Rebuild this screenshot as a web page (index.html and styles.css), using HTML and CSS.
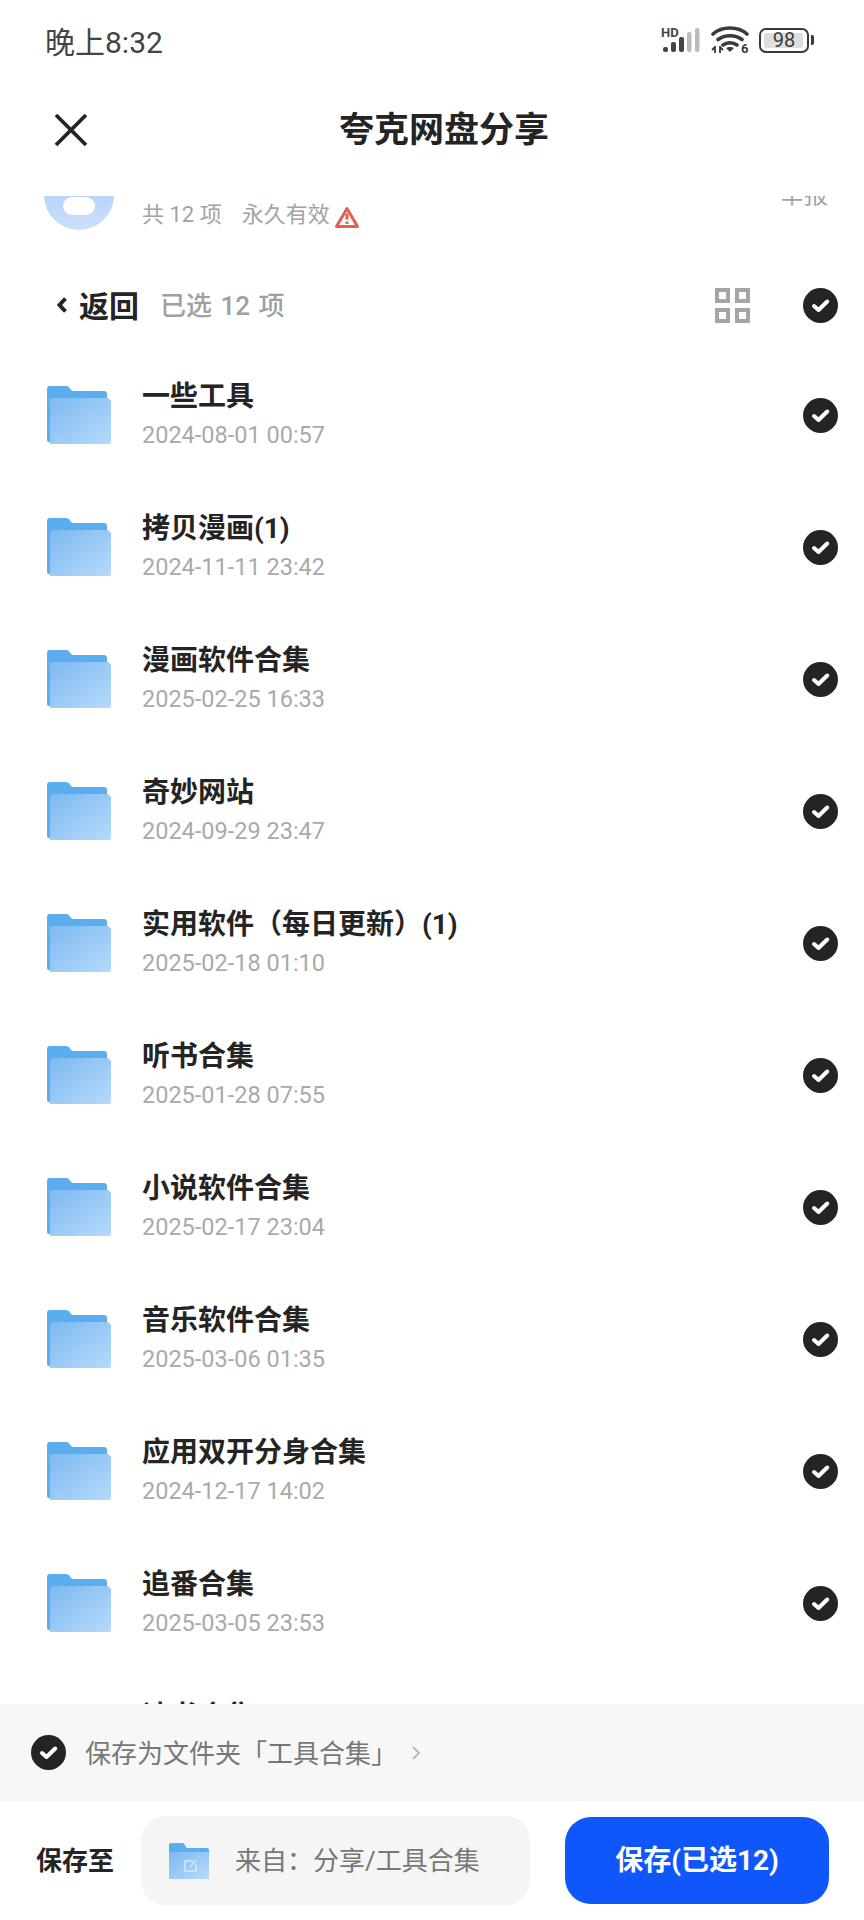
FILE: index.html
```html
<!DOCTYPE html>
<html lang="zh-CN">
<head>
    <meta charset="UTF-8">
    <meta name="viewport" content="width=device-width, initial-scale=1.0">
    <title>夸克网盘分享</title>
    <link rel="stylesheet" href="styles.css">
</head>
<body>
    <svg class="defs" width="0" height="0">
        <defs>
            <linearGradient id="folderFront" x1="0" y1="0" x2="1" y2="1">
                <stop offset="0" stop-color="#7db9f1"/>
                <stop offset="1" stop-color="#b6daFB"/>
            </linearGradient>
            <symbol id="folder" viewBox="0 0 64 58">
                <path d="M0 3a3 3 0 0 1 3-3h16c2 0 3 1 4 2.500l1 1.200c.5.800 1.500 1.300 3 1.300h30a3 3 0 0 1 3 3v48H2a2 2 0 0 1-2-2z" fill="#5aaef0"/>
                <path d="M3 14a2 2 0 0 1 2-2h56l3 3v41a2 2 0 0 1-2 2H3z" fill="url(#folderFront)"/>
                <path d="M53 21h6M53 25h6" stroke="#9cc6ec" stroke-width="1.200"/>
            </symbol>
            <symbol id="check" viewBox="0 0 35 35">
                <circle cx="17.5" cy="17.5" r="17.5" fill="#242424"/>
                <path d="M11 18l4.500 4 8.700-8.500" fill="none" stroke="#fff" stroke-width="4" stroke-linecap="round" stroke-linejoin="round"/>
            </symbol>
        </defs>
    </svg>

    <div class="status-bar">
        <span class="clock">晚上8:32</span>
        <div class="status-icons">
            <svg class="signal" width="40" height="26" viewBox="0 0 40 26">
                <text x="0" y="10" class="hd">HD</text>
                <rect x="2" y="20" width="5" height="5" rx="2" fill="#444"/>
                <rect x="10" y="15" width="5" height="10" rx="2" fill="#444"/>
                <rect x="18" y="10" width="5" height="15" rx="2" fill="#444"/>
                <rect x="26" y="5" width="4.500" height="20" rx="2" fill="#bbb"/>
                <rect x="34" y="1" width="4.500" height="24" rx="2" fill="#bbb"/>
            </svg>
            <svg class="wifi" width="38" height="30" viewBox="0 0 38 30">
                <path d="M2 9C11 1 27 1 36 9M7 14.500c7-5 17-5 24 0M12 20c4-3 10-3 14 0" fill="none" stroke="#3a3a3a" stroke-width="3.600" stroke-linecap="round"/>
                <path d="M15 23c2-1.500 6-1.500 8 0l-4 4z" fill="#3a3a3a"/>
                <path d="M4 21v7M1 25l3-3M9 21v7M12 25l-3-3" fill="none" stroke="#3a3a3a" stroke-width="1.800"/>
                <text x="30" y="28" class="six">6</text>
            </svg>
            <div class="battery">
                <div class="battery-box"><div class="battery-fill"></div><span>98</span></div>
                <div class="battery-cap"></div>
            </div>
        </div>
    </div>

    <header class="title-bar">
        <svg class="close-icon" width="34" height="34" viewBox="0 0 34 34">
            <path d="M2 2l30 30M32 2L2 32" stroke="#242424" stroke-width="3.800" fill="none"/>
        </svg>
        <h1>夸克网盘分享</h1>
    </header>

    <main class="content">
        <div class="share-info">
            <div class="share-inner">
                <div class="avatar"><div class="avatar-hole"></div></div>
                <div class="share-meta">
                    <span class="share-count">共 12 项</span>
                    <span class="share-expire">永久有效</span>
                    <svg class="warn-icon" width="26" height="24" viewBox="0 0 26 24">
                        <path d="M13 3.500L23.500 21.500H2.500z" fill="none" stroke="#e0605a" stroke-width="3" stroke-linejoin="round"/>
                        <path d="M13 8.500v6M13 16.500v2.500" stroke="#e0605a" stroke-width="3" fill="none"/>
                    </svg>
                </div>
                <span class="report">举报</span>
            </div>
        </div>

        <div class="toolbar">
            <svg class="back-icon" width="12" height="18" viewBox="0 0 12 18">
                <path d="M9.500 2.500L3.500 9l6 6.500" fill="none" stroke="#242424" stroke-width="4"/>
            </svg>
            <span class="back-label">返回</span>
            <span class="selected-label">已选 12 项</span>
            <svg class="grid-icon" width="35" height="35" viewBox="0 0 35 35">
                <path d="M2 2h11v11H2zM22 2h11v11H22zM2 22h11v11H2zM22 22h11v11H22z" fill="none" stroke="#a5a5a5" stroke-width="4"/>
            </svg>
            <svg class="check-icon"><use href="#check"/></svg>
        </div>

        <ul class="file-list">
            <li class="file-row">
                <svg class="folder-icon"><use href="#folder"/></svg>
                <div class="file-text"><div class="file-name">一些工具</div><div class="file-date">2024-08-01 00:57</div></div>
                <svg class="check-icon"><use href="#check"/></svg>
            </li>
            <li class="file-row">
                <svg class="folder-icon"><use href="#folder"/></svg>
                <div class="file-text"><div class="file-name">拷贝漫画(1)</div><div class="file-date">2024-11-11 23:42</div></div>
                <svg class="check-icon"><use href="#check"/></svg>
            </li>
            <li class="file-row">
                <svg class="folder-icon"><use href="#folder"/></svg>
                <div class="file-text"><div class="file-name">漫画软件合集</div><div class="file-date">2025-02-25 16:33</div></div>
                <svg class="check-icon"><use href="#check"/></svg>
            </li>
            <li class="file-row">
                <svg class="folder-icon"><use href="#folder"/></svg>
                <div class="file-text"><div class="file-name">奇妙网站</div><div class="file-date">2024-09-29 23:47</div></div>
                <svg class="check-icon"><use href="#check"/></svg>
            </li>
            <li class="file-row">
                <svg class="folder-icon"><use href="#folder"/></svg>
                <div class="file-text"><div class="file-name">实用软件（每日更新）(1)</div><div class="file-date">2025-02-18 01:10</div></div>
                <svg class="check-icon"><use href="#check"/></svg>
            </li>
            <li class="file-row">
                <svg class="folder-icon"><use href="#folder"/></svg>
                <div class="file-text"><div class="file-name">听书合集</div><div class="file-date">2025-01-28 07:55</div></div>
                <svg class="check-icon"><use href="#check"/></svg>
            </li>
            <li class="file-row">
                <svg class="folder-icon"><use href="#folder"/></svg>
                <div class="file-text"><div class="file-name">小说软件合集</div><div class="file-date">2025-02-17 23:04</div></div>
                <svg class="check-icon"><use href="#check"/></svg>
            </li>
            <li class="file-row">
                <svg class="folder-icon"><use href="#folder"/></svg>
                <div class="file-text"><div class="file-name">音乐软件合集</div><div class="file-date">2025-03-06 01:35</div></div>
                <svg class="check-icon"><use href="#check"/></svg>
            </li>
            <li class="file-row">
                <svg class="folder-icon"><use href="#folder"/></svg>
                <div class="file-text"><div class="file-name">应用双开分身合集</div><div class="file-date">2024-12-17 14:02</div></div>
                <svg class="check-icon"><use href="#check"/></svg>
            </li>
            <li class="file-row">
                <svg class="folder-icon"><use href="#folder"/></svg>
                <div class="file-text"><div class="file-name">追番合集</div><div class="file-date">2025-03-05 23:53</div></div>
                <svg class="check-icon"><use href="#check"/></svg>
            </li>
            <li class="file-row">
                <svg class="folder-icon"><use href="#folder"/></svg>
                <div class="file-text"><div class="file-name">读书合集</div><div class="file-date"></div></div>
                <svg class="check-icon"><use href="#check"/></svg>
            </li>
        </ul>
    </main>

    <div class="save-option">
        <svg class="check-icon"><use href="#check"/></svg>
        <span class="save-option-text">保存为文件夹「工具合集」</span>
        <svg class="chevron-icon" width="10" height="16" viewBox="0 0 10 16">
            <path d="M2 2l6 6-6 6" fill="none" stroke="#aaa" stroke-width="1.600"/>
        </svg>
    </div>

    <footer class="save-bar">
        <span class="save-to">保存至</span>
        <div class="save-path">
            <svg class="path-folder" width="40" height="36" viewBox="0 0 40 36">
                <path d="M0 2a2 2 0 0 1 2-2h11c1.500 0 2 .5 3 2l1 2c.5.800 1 1 2 1h19a2 2 0 0 1 2 2v27a2 2 0 0 1-2 2H0z" fill="#5aaef0"/>
                <path d="M0 9h38a2 2 0 0 1 2 2v23a2 2 0 0 1-2 2H0z" fill="url(#folderFront)"/>
                <path d="M24 18h-8v10h11v-7M21 24l6-7" fill="none" stroke="#d5e9fb" stroke-width="1.600"/>
            </svg>
            <span class="save-path-text">来自：分享/工具合集</span>
        </div>
        <button class="save-button">保存(已选12)</button>
    </footer>
</body>
</html>
```

FILE: styles.css
```css
* {
    box-sizing: border-box;
}

body {
    font-family: "Roboto", "Noto Sans CJK SC", sans-serif;
    background-color: #fff;
    color: #242424;
    margin: 0;
    padding: 0;
    width: 864px;
    height: 1920px;
    display: flex;
    flex-direction: column;
    overflow: hidden;
}

.defs {
    position: absolute;
}

.status-bar {
    height: 80px;
    flex: none;
    display: flex;
    align-items: center;
    justify-content: space-between;
    padding: 0 50px 0 45px;
}

.clock {
    font-size: 30px;
    color: #444;
}

.status-icons {
    display: flex;
    align-items: center;
    gap: 10px;
}

.hd {
    font-family: "Roboto", sans-serif;
    font-size: 13px;
    font-weight: 700;
    fill: #444;
}

.six {
    font-family: "Roboto", sans-serif;
    font-size: 13px;
    font-weight: 700;
    fill: #3a3a3a;
}

.battery {
    display: flex;
    align-items: center;
    gap: 2px;
}

.battery-box {
    position: relative;
    width: 50px;
    height: 25px;
    border: 2.5px solid #3a3a3a;
    border-radius: 7px;
    display: flex;
    align-items: center;
    justify-content: center;
}

.battery-fill {
    position: absolute;
    left: 3px;
    top: 3px;
    bottom: 3px;
    right: 4px;
    background-color: #dedede;
    border-radius: 2px;
}

.battery-box span {
    position: relative;
    font-size: 20px;
    color: #3a3a3a;
}

.battery-cap {
    width: 3px;
    height: 10px;
    background-color: #3a3a3a;
    border-radius: 0 2px 2px 0;
}

.title-bar {
    height: 116px;
    flex: none;
    display: flex;
    align-items: flex-start;
    padding: 33px 0 0 54px;
}

.title-bar h1 {
    font-size: 35px;
    font-weight: 700;
    line-height: 36px;
    margin: 0 0 0 251px;
}

.content {
    flex: 1;
    min-height: 0;
    overflow: hidden;
}

.share-info {
    height: 65px;
    overflow: hidden;
}

.share-inner {
    display: flex;
    align-items: flex-start;
    margin-top: -36px;
    padding: 0 36px 0 44px;
}

.avatar {
    position: relative;
    width: 70px;
    height: 70px;
    flex: none;
    border-radius: 50%;
    background: linear-gradient(180deg, #a6cafb, #cbdffa);
}

.avatar-hole {
    position: absolute;
    left: 19px;
    top: 37px;
    width: 32px;
    height: 18px;
    border-radius: 9px;
    background-color: #fff;
}

.share-meta {
    display: flex;
    align-items: center;
    margin: 40px 0 0 28px;
    font-size: 22px;
    color: #a3a3a3;
    line-height: 30px;
}

.share-expire {
    margin-left: 20px;
}

.warn-icon {
    margin: 4px 0 0 4px;
}

.report {
    margin: 18px 0 0 auto;
    font-size: 24px;
    color: #a3a3a3;
    line-height: 34px;
}

.toolbar {
    height: 88px;
    display: flex;
    align-items: center;
    padding: 0 26px 0 56px;
}

.back-label {
    font-size: 30px;
    font-weight: 700;
    margin-left: 11px;
    padding-bottom: 2px;
}

.selected-label {
    font-size: 26px;
    font-weight: 500;
    color: #a0a0a0;
    word-spacing: 2px;
    margin-left: 21px;
    padding-bottom: 3px;
    flex: 1;
}

.grid-icon {
    margin-right: 53px;
}

.check-icon {
    width: 35px;
    height: 35px;
    flex: none;
}

.file-list {
    list-style: none;
    margin: 0;
    padding: 0;
}

.file-row {
    height: 132px;
    display: flex;
    align-items: center;
    padding: 0 26px 0 47px;
}

.folder-icon {
    width: 64px;
    height: 58px;
    flex: none;
}

.file-text {
    flex: 1;
    margin-left: 31px;
}

.file-name {
    font-size: 28px;
    font-weight: 700;
    line-height: 38px;
}

.file-date {
    font-size: 23.5px;
    color: #aaa;
    line-height: 32px;
    min-height: 34px;
    margin-top: 3px;
    padding-bottom: 2px;
}

.save-option {
    height: 97px;
    flex: none;
    background-color: #f7f7f7;
    display: flex;
    align-items: center;
    padding-left: 31px;
}

.save-option-text {
    font-size: 26px;
    color: #777;
    margin-left: 19px;
    padding-bottom: 2px;
}

.chevron-icon {
    margin-left: 14px;
}

.save-bar {
    height: 119px;
    flex: none;
    display: flex;
    align-items: center;
    padding: 0 35px 0 36px;
}

.save-to {
    font-size: 26px;
    font-weight: 700;
    width: 105px;
    padding-bottom: 5px;
    flex: none;
}

.save-path {
    width: 389px;
    height: 89px;
    flex: none;
    background-color: #f5f5f5;
    border-radius: 24px;
    display: flex;
    align-items: center;
    padding-left: 28px;
}

.save-path-text {
    font-size: 26px;
    color: #777;
    margin-left: 26px;
    padding-bottom: 4px;
}

.save-button {
    margin-left: 35px;
    flex: 1;
    height: 87px;
    border: none;
    border-radius: 26px;
    padding-bottom: 6px;
    background-color: #0f56fb;
    color: #fff;
    font-family: inherit;
    font-size: 28px;
    font-weight: 700;
}
```
